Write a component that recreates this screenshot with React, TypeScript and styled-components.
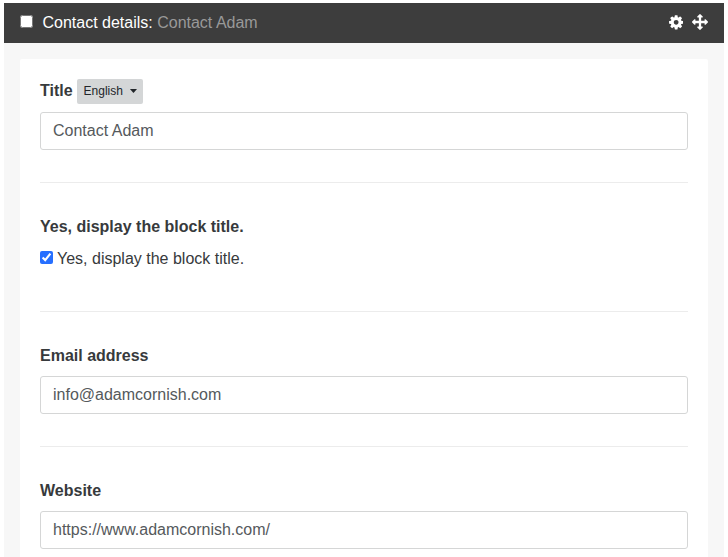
import React from "react";
import styled, { createGlobalStyle } from "styled-components";

const GlobalStyle = createGlobalStyle`
  * { box-sizing: border-box; }
  html { background: #fff; }
  body {
    margin: 0;
    height: 557px;
    overflow: hidden;
    font: 16px/24px "Liberation Sans", Arial, sans-serif;
    color: #373a3c;
  }
`;

const Block = styled.section`
  margin: 3px 4px 0;
  height: 554px;
  overflow: hidden;
  background: #f7f7f7;
`;

const Header = styled.header`
  display: flex;
  align-items: center;
  height: 40px;
  padding: 0 16px;
  background: #3d3d3d;
  color: #fff;
`;

const HeaderTitle = styled.div`
  flex: 1;
  margin-left: 9.45px;
`;

const Muted = styled.span`
  color: #999;
`;

const Actions = styled.div`
  display: flex;
  align-items: center;
  gap: 9px;
  margin-bottom: 2px;
`;

const Icon = styled.svg`
  display: block;
  fill: currentColor;
`;

const Checkbox = styled.input`
  width: 13px;
  height: 13px;
  margin: 0 0 3px;
  flex: none;
  accent-color: #266fff;
`;

const Card = styled.div`
  margin: 16px 16px 0;
  padding: 20px 20px 0;
  height: 600px;
  border-radius: 2px;
  background: #fff;
`;

const Field = styled.div<{ $gap?: number }>`
  padding-bottom: ${(p) => p.$gap ?? 32}px;
  margin-bottom: 32px;
  border-bottom: 1px solid #ececec;
`;

const LabelRow = styled.div<{ $height?: number }>`
  display: flex;
  align-items: flex-start;
  height: ${(p) => p.$height ?? 24}px;
  margin-bottom: 8px;
  gap: 4.4px;
`;

const Label = styled.label`
  font-weight: 700;
`;

const Language = styled.button`
  display: flex;
  align-items: center;
  height: 25px;
  width: 66px;
  padding: 0 6px 2px 6.6px;
  border: 0;
  border-radius: 2px;
  background: #d4d6d7;
  color: #212529;
  font: 12px/18px "Liberation Sans", Arial, sans-serif;
`;

const Caret = styled.span`
  width: 7.4px;
  height: 4px;
  margin-left: 7px;
  margin-top: 1px;
  background: #212529;
  clip-path: polygon(0 0, 100% 0, 50% 100%);
`;

const TextInput = styled.input`
  display: block;
  width: 100%;
  height: 38px;
  padding: 6px 12px;
  border: 1px solid #d5d6d6;
  border-radius: 3px;
  background: #fff;
  color: #55595c;
  font: inherit;
`;

const CheckRow = styled.label`
  display: flex;
  align-items: center;
  gap: 4px;
  height: 24px;
`;

const GearIcon = () => (
  <Icon viewBox="0 0 1536 1792" width="14.3" height="16.6">
    <path d="M1024 896q0-106-75-181t-181-75-181 75-75 181 75 181 181 75 181-75 75-181zm512-109v222q0 12-8 23t-20 13l-185 28q-19 54-39 91 35 50 107 138 10 12 10 25t-9 23q-27 37-99 108t-94 71q-12 0-26-9l-138-108q-44 23-91 38-16 136-29 186-7 28-36 28h-222q-14 0-24.5-8.5t-11.5-21.5l-28-184q-49-16-90-37l-141 107q-10 9-25 9-14 0-25-11-126-114-165-168-7-10-7-23 0-12 8-23 15-21 51-66.5t54-70.5q-27-50-41-99l-183-27q-13-2-21-12.5t-8-23.5v-222q0-12 8-23t19-13l186-28q14-46 39-92-40-57-107-138-10-12-10-24 0-10 9-23 26-36 98.5-107.5t94.5-71.5q13 0 26 10l138 107q44-23 91-38 16-136 29-186 7-28 36-28h222q14 0 24.5 8.5t11.5 21.5l28 184q49 16 90 37l142-107q9-9 24-9 13 0 25 10 129 119 165 170 7 8 7 22 0 12-8 23-15 21-51 66.5t-54 70.5q26 50 41 98l183 28q13 2 21 12.5t8 23.5z" />
  </Icon>
);

const MoveIcon = () => (
  <Icon viewBox="0 0 1792 1792" width="16" height="16">
    <path d="M1792 896q0 26-19 45l-256 256q-19 19-45 19t-45-19-19-45v-128h-384v384h128q26 0 45 19t19 45-19 45l-256 256q-19 19-45 19t-45-19l-256-256q-19-19-19-45t19-45 45-19h128v-384h-384v128q0 26-19 45t-45 19-45-19l-256-256q-19-19-19-45t19-45l256-256q19-19 45-19t45 19 19 45v128h384v-384h-128q-26 0-45-19t-19-45 19-45l256-256q19-19 45-19t45 19l256 256q19 19 19 45t-19 45-45 19h-128v384h384v-128q0-26 19-45t45-19 45 19l256 256q19 19 19 45z" />
  </Icon>
);

export default function App() {
  return (
    <>
      <GlobalStyle />
      <Block>
        <Header>
          <Checkbox type="checkbox" />
          <HeaderTitle>
            Contact details: <Muted>Contact Adam</Muted>
          </HeaderTitle>
          <Actions>
            <GearIcon />
            <MoveIcon />
          </Actions>
        </Header>
        <Card>
          <Field>
            <LabelRow $height={25}>
              <Label htmlFor="title">Title</Label>
              <Language type="button">
                English <Caret />
              </Language>
            </LabelRow>
            <TextInput id="title" defaultValue="Contact Adam" />
          </Field>
          <Field $gap={40}>
            <LabelRow>
              <Label as="span">Yes, display the block title.</Label>
            </LabelRow>
            <CheckRow>
              <Checkbox type="checkbox" defaultChecked />
              Yes, display the block title.
            </CheckRow>
          </Field>
          <Field>
            <LabelRow>
              <Label htmlFor="email">Email address</Label>
            </LabelRow>
            <TextInput id="email" defaultValue="info@adamcornish.com" />
          </Field>
          <Field>
            <LabelRow>
              <Label htmlFor="website">Website</Label>
            </LabelRow>
            <TextInput id="website" defaultValue="https://www.adamcornish.com/" />
          </Field>
        </Card>
      </Block>
    </>
  );
}
